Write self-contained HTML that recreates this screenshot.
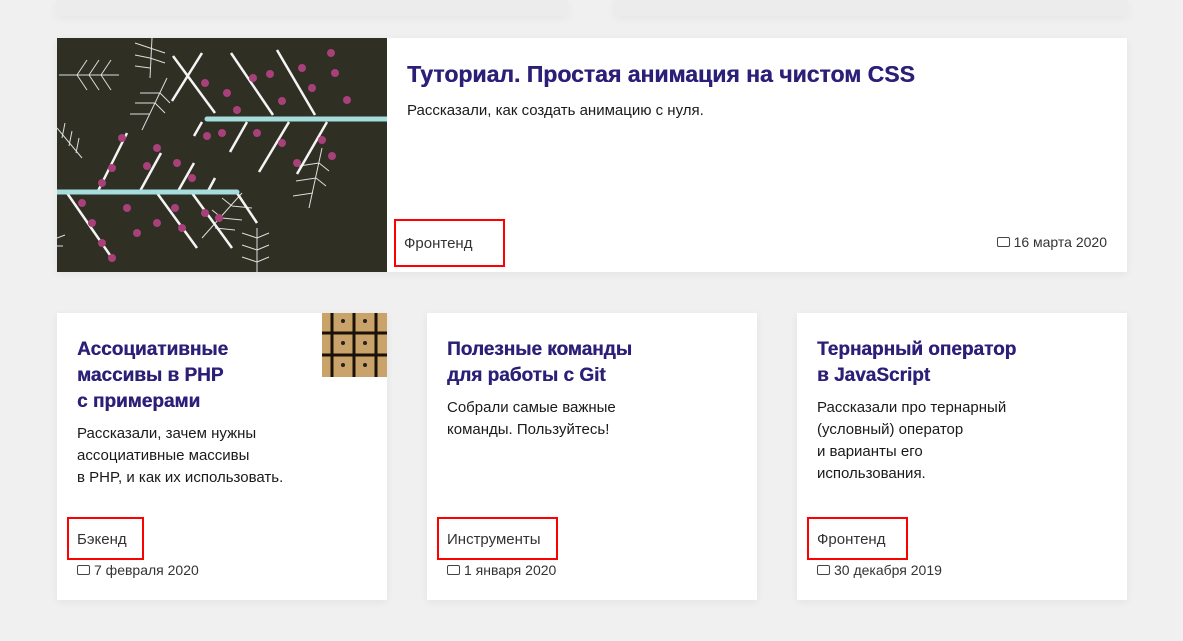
<!DOCTYPE html>
<html><head><meta charset="utf-8"><style>
*{margin:0;padding:0;box-sizing:border-box}
body{width:1183px;height:641px;background:#f0f0f0;font-family:"Liberation Sans","DejaVu Sans",sans-serif;position:relative;overflow:hidden;color:#222}
.card{position:absolute;background:#fff;box-shadow:0 2px 8px rgba(0,0,0,.06)}
.t{position:absolute;color:#2b1f78;font-weight:bold;text-shadow:0.4px 0 0 #2b1f78}
.d{position:absolute;font-size:15px;line-height:22px;color:#1a1a1a}
.tag{position:absolute;border:2px solid #f00;font-size:15px;color:#333;padding-left:8px;line-height:40px}
.date{position:absolute;font-size:14px;color:#333;white-space:nowrap}
.cal{display:inline-block;width:13px;height:10px;border:1.5px solid #444;border-radius:2px;margin-right:4px;vertical-align:0}
.top{position:absolute;top:0;height:16px;background:#ececec;box-shadow:0 2px 10px rgba(0,0,0,.05)}
</style></head><body>
<div class="top" style="left:57px;width:510px"></div>
<div class="top" style="left:615px;width:512px"></div>

<div class="card" style="left:57px;top:38px;width:1070px;height:234px">
<svg style="position:absolute;left:0;top:0" width="330" height="234" viewBox="0 0 330 234">
<rect width="330" height="234" fill="#2f2f23"/>
<g stroke="#ddd" stroke-width="1" fill="none">
<path d="M2 37H62M20 37l10-15M32 37l10-15M44 37l10-15M20 37l10 15M32 37l10 15M44 37l10 15"/>
<path d="M95 0l-2 40M93 10l-15 -5M93 20l-15-3M93 30l-15-2M93 10l15 5M93 20l15 5"/>
<path d="M110 40l-25 52M103 55l-20 0M98 65l-20 0M93 76l-20 0M103 55l10 10M98 65l10 10"/>
<path d="M0 90l25 30M5 100l3-15M12 108l3-15M19 115l3-15"/>
<path d="M185 155l-40 45M175 168l20 2M165 180l20 2M158 190l20 2M175 168l-10-8M165 180l-10-8"/>
<path d="M265 110l-13 60M262 125l-20 3M259 140l-20 3M256 155l-20 3M262 125l10 8M259 140l10 8"/>
<path d="M200 190v44M200 200l-15-5M200 212l-15-5M200 224l-15-5M200 200l12-5M200 212l12-5M200 224l12-5"/>
<path d="M0 200l8-3M0 208l6 0"/>
</g>
<g stroke="#f4f4f4" stroke-width="2.5">
<path d="M115 63l30-48M158 75l-42-57M216 77l-42-62M258 77l-38-65M145 84l-8 14M190 84l-17 30M232 84l-30 50M270 84l-30 52M40 155l30-60M82 155l22-40M120 155l17-30M150 155l8-15M10 155l45 65M100 155l40 55M135 155l40 55M180 155l20 30"/>
</g>
<g stroke="#a6dcdc" stroke-width="5" stroke-linecap="round">
<path d="M150 81H330M0 154H180"/>
</g>
<g fill="#a8407a">
<circle cx="170" cy="55" r="4"/><circle cx="180" cy="72" r="4"/><circle cx="148" cy="45" r="4"/><circle cx="213" cy="36" r="4"/><circle cx="225" cy="63" r="4"/><circle cx="196" cy="40" r="4"/><circle cx="245" cy="30" r="4"/><circle cx="255" cy="50" r="4"/><circle cx="278" cy="35" r="4"/><circle cx="290" cy="62" r="4"/><circle cx="274" cy="15" r="4"/><circle cx="200" cy="95" r="4"/><circle cx="225" cy="105" r="4"/><circle cx="240" cy="125" r="4"/><circle cx="265" cy="102" r="4"/><circle cx="275" cy="118" r="4"/><circle cx="165" cy="95" r="4"/><circle cx="150" cy="98" r="4"/><circle cx="65" cy="100" r="4"/><circle cx="55" cy="130" r="4"/><circle cx="45" cy="145" r="4"/><circle cx="100" cy="110" r="4"/><circle cx="90" cy="128" r="4"/><circle cx="120" cy="125" r="4"/><circle cx="135" cy="140" r="4"/><circle cx="25" cy="165" r="4"/><circle cx="35" cy="185" r="4"/><circle cx="45" cy="205" r="4"/><circle cx="55" cy="220" r="4"/><circle cx="118" cy="170" r="4"/><circle cx="125" cy="190" r="4"/><circle cx="148" cy="175" r="4"/><circle cx="100" cy="185" r="4"/><circle cx="70" cy="170" r="4"/><circle cx="80" cy="195" r="4"/><circle cx="162" cy="180" r="4"/></g>
</svg>
<div class="t" style="left:350px;top:22px;font-size:23px;line-height:28px;white-space:nowrap">Туториал. Простая анимация на чистом CSS</div>
<div class="d" style="left:350px;top:62px">Рассказали, как создать анимацию с нуля.</div>
<div class="tag" style="left:337px;top:181px;width:111px;height:48px;line-height:46px">Фронтенд</div>
<div class="date" style="right:20px;top:196px"><span class="cal"></span>16 марта 2020</div>
</div>

<div class="card" style="left:57px;top:313px;width:330px;height:287px">
<svg style="position:absolute;left:265px;top:0" width="65" height="64"><rect width="65" height="64" fill="#c9a36a"/><g stroke="#1a1208" stroke-width="3"><path d="M10 0v64M32 0v64M54 0v64M0 20h65M0 42h65"/></g><g fill="#222"><circle cx="21" cy="8" r="2"/><circle cx="43" cy="8" r="2"/><circle cx="21" cy="30" r="2"/><circle cx="43" cy="30" r="2"/><circle cx="21" cy="52" r="2"/><circle cx="43" cy="52" r="2"/></g></svg>
<div class="t" style="left:20px;top:24px;font-size:19px;line-height:26px">Ассоциативные<br>массивы в PHP<br>с примерами</div>
<div class="d" style="left:20px;top:110px">Рассказали, зачем нужны<br>ассоциативные массивы<br>в PHP, и как их использовать.</div>
<div class="tag" style="left:10px;top:204px;width:77px;height:43px;line-height:42px">Бэкенд</div>
<div class="date" style="left:20px;top:249px"><span class="cal"></span>7 февраля 2020</div>
</div>

<div class="card" style="left:427px;top:313px;width:330px;height:287px">
<div class="t" style="left:20px;top:24px;font-size:19px;line-height:26px">Полезные команды<br>для работы с Git</div>
<div class="d" style="left:20px;top:84px">Собрали самые важные<br>команды. Пользуйтесь!</div>
<div class="tag" style="left:10px;top:204px;width:121px;height:43px;line-height:42px">Инструменты</div>
<div class="date" style="left:20px;top:249px"><span class="cal"></span>1 января 2020</div>
</div>

<div class="card" style="left:797px;top:313px;width:330px;height:287px">
<div class="t" style="left:20px;top:24px;font-size:19px;line-height:26px">Тернарный оператор<br>в JavaScript</div>
<div class="d" style="left:20px;top:84px">Рассказали про тернарный<br>(условный) оператор<br>и варианты его<br>использования.</div>
<div class="tag" style="left:10px;top:204px;width:101px;height:43px;line-height:42px">Фронтенд</div>
<div class="date" style="left:20px;top:249px"><span class="cal"></span>30 декабря 2019</div>
</div>
</body></html>
